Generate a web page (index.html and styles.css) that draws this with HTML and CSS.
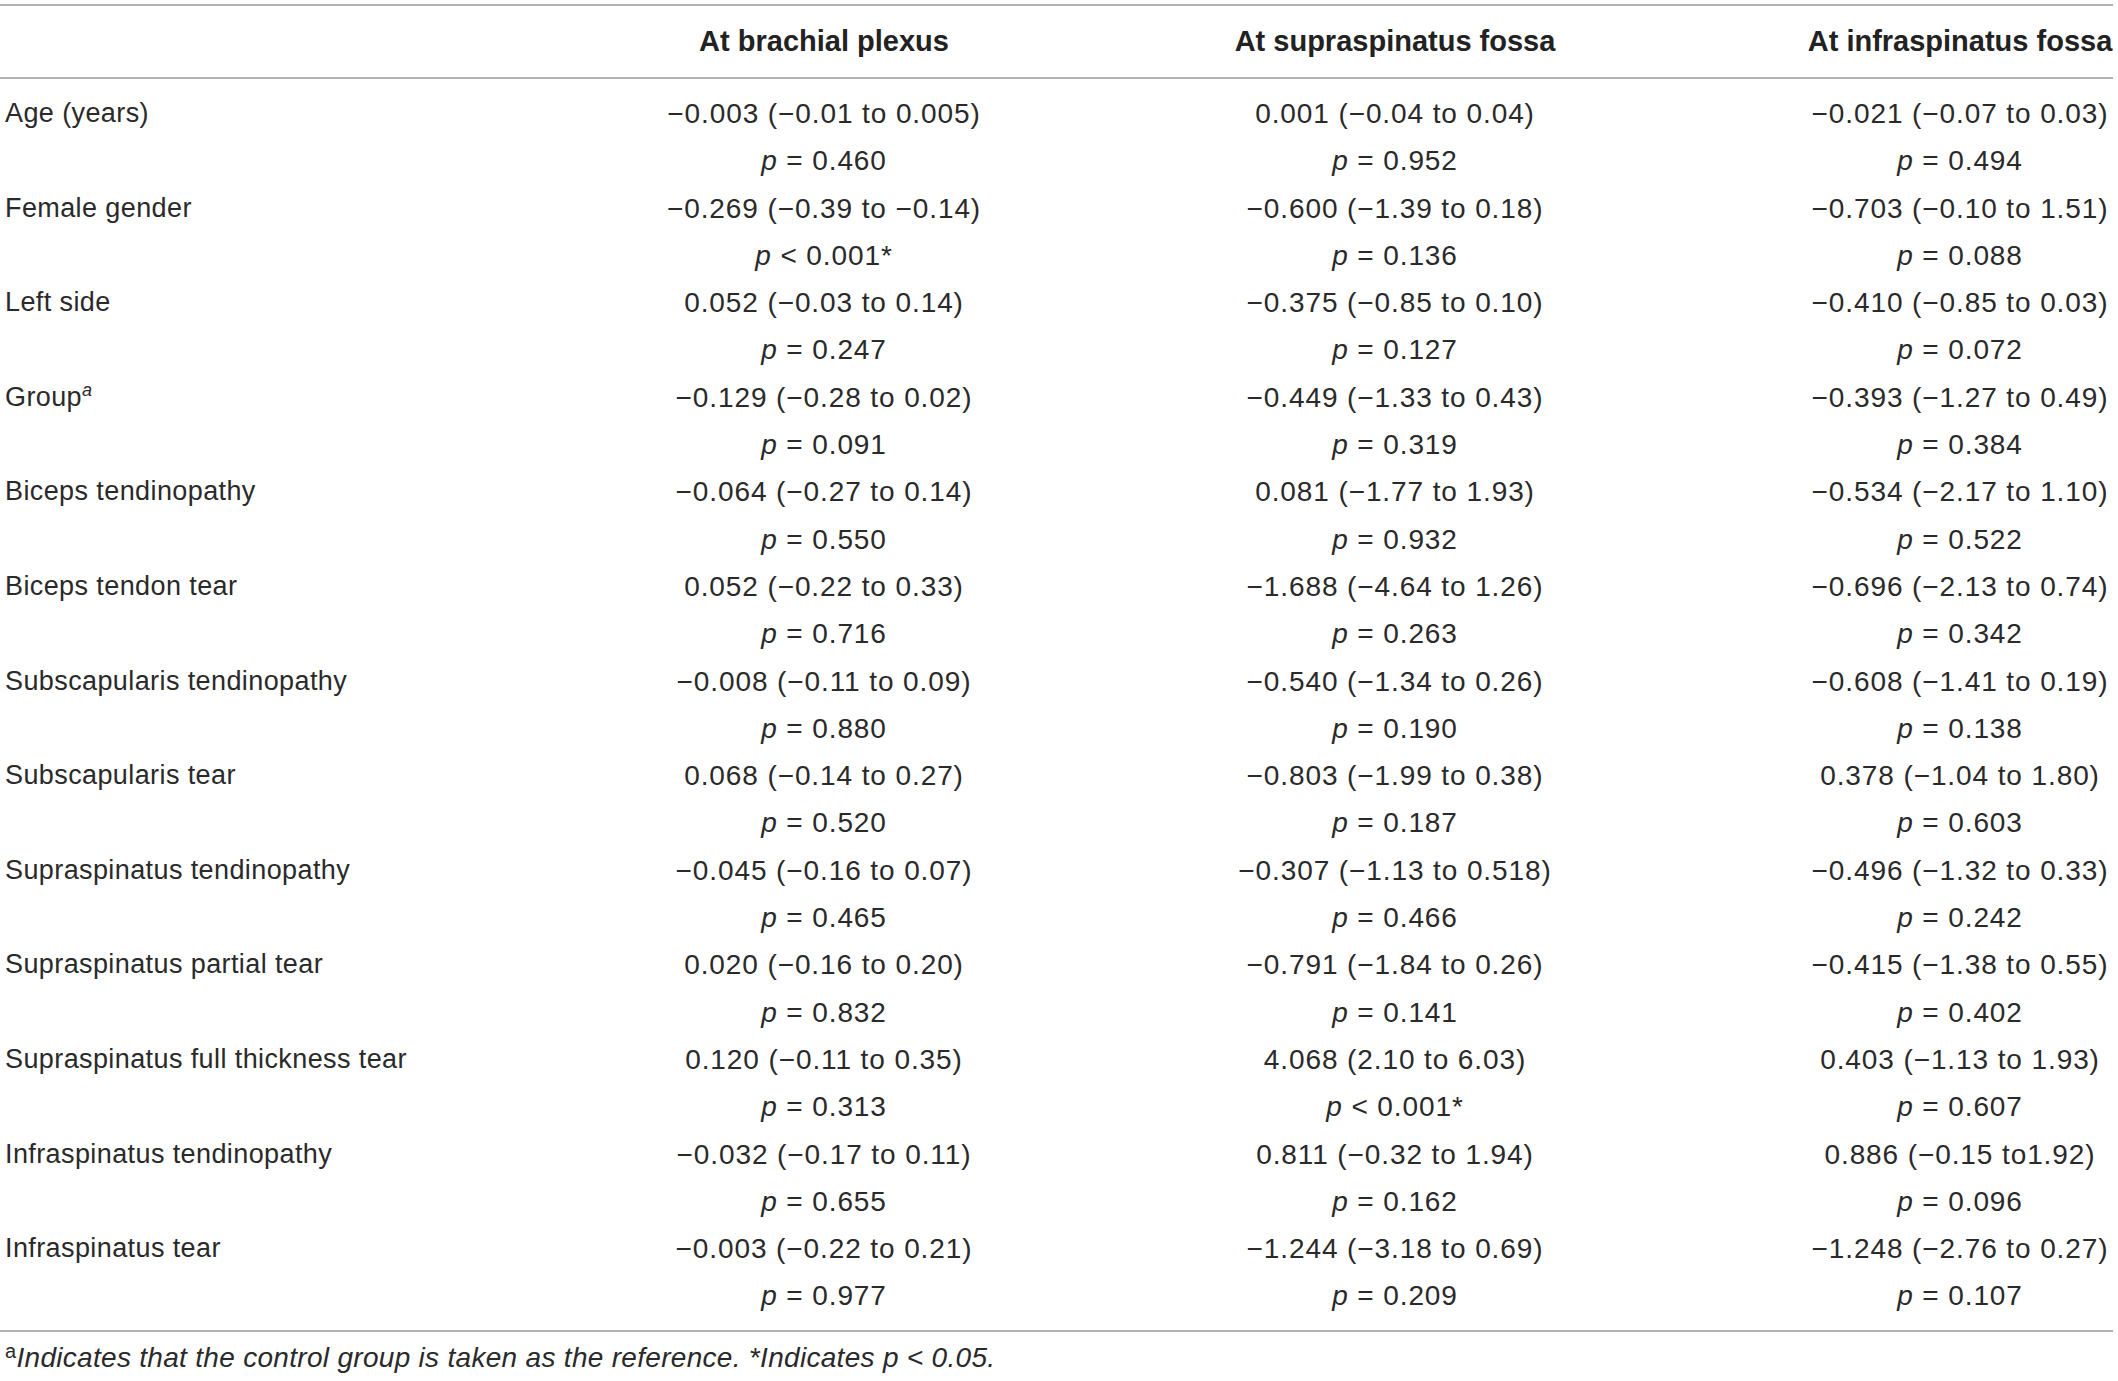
FILE: index.html
```html
<!DOCTYPE html>
<html>
<head>
<meta charset="utf-8">
<link rel="stylesheet" href="styles.css">
</head>
<body>
<div class="table">
  <div class="row head">
    <div class="label"></div>
    <div class="cell">At brachial plexus</div>
    <div class="cell">At supraspinatus fossa</div>
    <div class="cell">At infraspinatus fossa</div>
  </div>
  <div class="body">
    <div class="row"><div class="label">Age (years)</div>
      <div class="cell"><span>−0.003 (−0.01 to 0.005)</span><span><i>p</i> = 0.460</span></div>
      <div class="cell"><span>0.001 (−0.04 to 0.04)</span><span><i>p</i> = 0.952</span></div>
      <div class="cell"><span>−0.021 (−0.07 to 0.03)</span><span><i>p</i> = 0.494</span></div></div>
    <div class="row"><div class="label">Female gender</div>
      <div class="cell"><span>−0.269 (−0.39 to −0.14)</span><span><i>p</i> &lt; 0.001*</span></div>
      <div class="cell"><span>−0.600 (−1.39 to 0.18)</span><span><i>p</i> = 0.136</span></div>
      <div class="cell"><span>−0.703 (−0.10 to 1.51)</span><span><i>p</i> = 0.088</span></div></div>
    <div class="row"><div class="label">Left side</div>
      <div class="cell"><span>0.052 (−0.03 to 0.14)</span><span><i>p</i> = 0.247</span></div>
      <div class="cell"><span>−0.375 (−0.85 to 0.10)</span><span><i>p</i> = 0.127</span></div>
      <div class="cell"><span>−0.410 (−0.85 to 0.03)</span><span><i>p</i> = 0.072</span></div></div>
    <div class="row"><div class="label">Group<sup>a</sup></div>
      <div class="cell"><span>−0.129 (−0.28 to 0.02)</span><span><i>p</i> = 0.091</span></div>
      <div class="cell"><span>−0.449 (−1.33 to 0.43)</span><span><i>p</i> = 0.319</span></div>
      <div class="cell"><span>−0.393 (−1.27 to 0.49)</span><span><i>p</i> = 0.384</span></div></div>
    <div class="row"><div class="label">Biceps tendinopathy</div>
      <div class="cell"><span>−0.064 (−0.27 to 0.14)</span><span><i>p</i> = 0.550</span></div>
      <div class="cell"><span>0.081 (−1.77 to 1.93)</span><span><i>p</i> = 0.932</span></div>
      <div class="cell"><span>−0.534 (−2.17 to 1.10)</span><span><i>p</i> = 0.522</span></div></div>
    <div class="row"><div class="label">Biceps tendon tear</div>
      <div class="cell"><span>0.052 (−0.22 to 0.33)</span><span><i>p</i> = 0.716</span></div>
      <div class="cell"><span>−1.688 (−4.64 to 1.26)</span><span><i>p</i> = 0.263</span></div>
      <div class="cell"><span>−0.696 (−2.13 to 0.74)</span><span><i>p</i> = 0.342</span></div></div>
    <div class="row"><div class="label">Subscapularis tendinopathy</div>
      <div class="cell"><span>−0.008 (−0.11 to 0.09)</span><span><i>p</i> = 0.880</span></div>
      <div class="cell"><span>−0.540 (−1.34 to 0.26)</span><span><i>p</i> = 0.190</span></div>
      <div class="cell"><span>−0.608 (−1.41 to 0.19)</span><span><i>p</i> = 0.138</span></div></div>
    <div class="row"><div class="label">Subscapularis tear</div>
      <div class="cell"><span>0.068 (−0.14 to 0.27)</span><span><i>p</i> = 0.520</span></div>
      <div class="cell"><span>−0.803 (−1.99 to 0.38)</span><span><i>p</i> = 0.187</span></div>
      <div class="cell"><span>0.378 (−1.04 to 1.80)</span><span><i>p</i> = 0.603</span></div></div>
    <div class="row"><div class="label">Supraspinatus tendinopathy</div>
      <div class="cell"><span>−0.045 (−0.16 to 0.07)</span><span><i>p</i> = 0.465</span></div>
      <div class="cell"><span>−0.307 (−1.13 to 0.518)</span><span><i>p</i> = 0.466</span></div>
      <div class="cell"><span>−0.496 (−1.32 to 0.33)</span><span><i>p</i> = 0.242</span></div></div>
    <div class="row"><div class="label">Supraspinatus partial tear</div>
      <div class="cell"><span>0.020 (−0.16 to 0.20)</span><span><i>p</i> = 0.832</span></div>
      <div class="cell"><span>−0.791 (−1.84 to 0.26)</span><span><i>p</i> = 0.141</span></div>
      <div class="cell"><span>−0.415 (−1.38 to 0.55)</span><span><i>p</i> = 0.402</span></div></div>
    <div class="row"><div class="label">Supraspinatus full thickness tear</div>
      <div class="cell"><span>0.120 (−0.11 to 0.35)</span><span><i>p</i> = 0.313</span></div>
      <div class="cell"><span>4.068 (2.10 to 6.03)</span><span><i>p</i> &lt; 0.001*</span></div>
      <div class="cell"><span>0.403 (−1.13 to 1.93)</span><span><i>p</i> = 0.607</span></div></div>
    <div class="row"><div class="label">Infraspinatus tendinopathy</div>
      <div class="cell"><span>−0.032 (−0.17 to 0.11)</span><span><i>p</i> = 0.655</span></div>
      <div class="cell"><span>0.811 (−0.32 to 1.94)</span><span><i>p</i> = 0.162</span></div>
      <div class="cell"><span>0.886 (−0.15 to1.92)</span><span><i>p</i> = 0.096</span></div></div>
    <div class="row"><div class="label">Infraspinatus tear</div>
      <div class="cell"><span>−0.003 (−0.22 to 0.21)</span><span><i>p</i> = 0.977</span></div>
      <div class="cell"><span>−1.244 (−3.18 to 0.69)</span><span><i>p</i> = 0.209</span></div>
      <div class="cell"><span>−1.248 (−2.76 to 0.27)</span><span><i>p</i> = 0.107</span></div></div>
  </div>
</div>
<p class="foot"><span class="fa">a</span><em>Indicates that the control group is taken as the reference. *Indicates p &lt; 0.05.</em></p>
</body>
</html>
```

FILE: styles.css
```css
html, body {
  margin: 0;
  padding: 0;
  background: #fff;
}
body {
  font-family: "Liberation Sans", Arial, sans-serif;
  color: #2a2a2a;
  font-size: 27px;
}
.table {
  width: 2113px;
  margin-top: 4px;
  border-top: 2px solid #b3b3b3;
  border-bottom: 2px solid #b3b3b3;
}
.row {
  display: grid;
  grid-template-columns: 665px 318px 824px 306px;
}
.head {
  height: 71px;
  align-items: center;
  border-bottom: 2px solid #b3b3b3;
  font-weight: bold;
  font-size: 29px;
  color: #222;
}
.body {
  padding: 11px 0 10px;
}
.label {
  padding-left: 5px;
  line-height: 47.3px;
  white-space: nowrap;
  letter-spacing: 0.4px;
}
.label sup {
  font-style: italic;
  font-size: 18px;
  vertical-align: 0;
  position: relative;
  top: -10px;
  letter-spacing: 0;
}
.cell {
  display: flex;
  flex-direction: column;
  align-items: center;
  white-space: nowrap;
  line-height: 47.3px;
}
.body .cell {
  font-size: 28px;
  letter-spacing: 0.9px;
}
.head .cell {
  line-height: 1.2;
}
.foot {
  margin: 0;
  padding: 9px 0 0 5px;
  font-size: 28px;
  letter-spacing: 0.3px;
  color: #2a2a2a;
  line-height: 34px;
}
.fa {
  font-size: 20px;
  position: relative;
  top: -9px;
}
```
